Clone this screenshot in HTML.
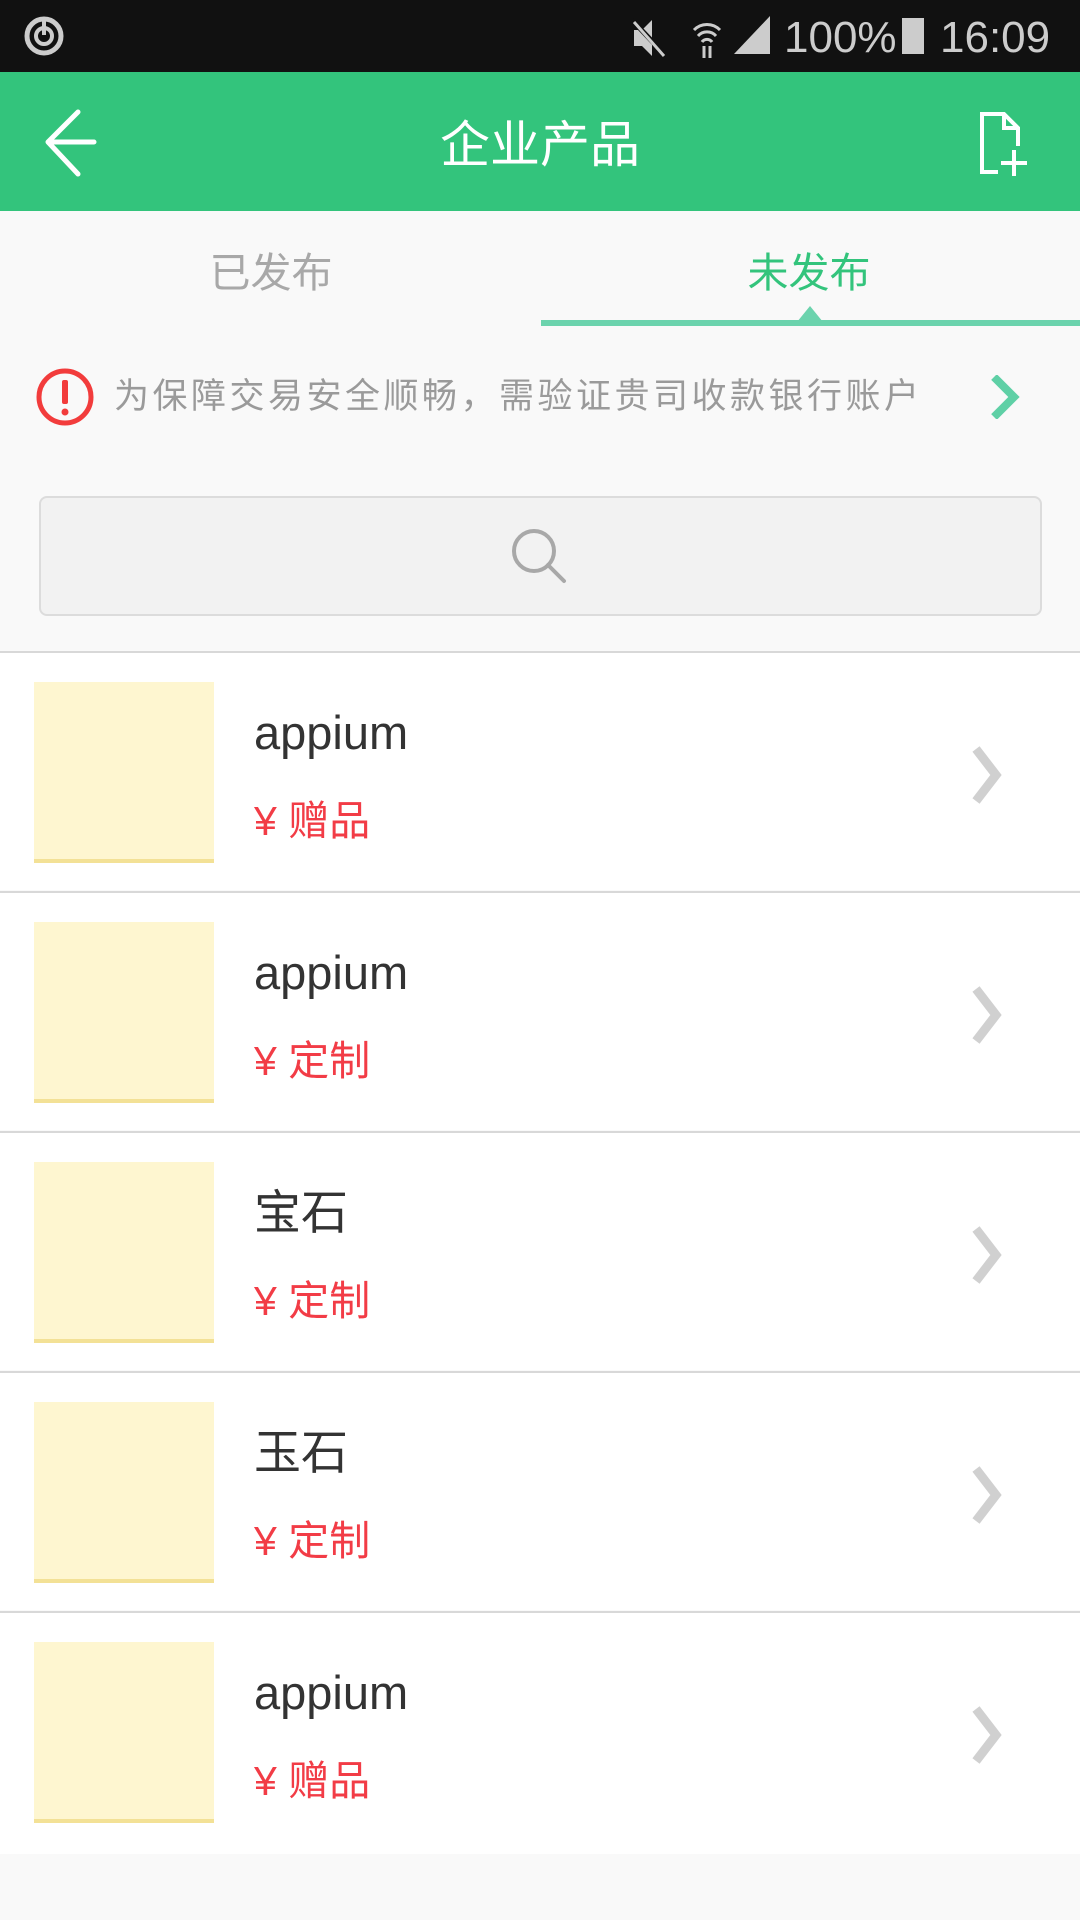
<!DOCTYPE html>
<html><head><meta charset="utf-8"><style>
*{margin:0;padding:0;box-sizing:border-box}
body{width:1080px;height:1920px;background:#f9f9f9;font-family:"Liberation Sans","Noto Sans CJK SC",sans-serif;position:relative;overflow:hidden}
.abs{position:absolute}
.status{left:0;top:0;width:1080px;height:72px;background:#111}
.hdr{left:0;top:72px;width:1080px;height:139px;background:#33c47c}
.title{left:0;width:1080px;top:115px;text-align:center;color:#fff;font-size:50px;line-height:60px}
.tab{top:247px;font-size:41px;line-height:52px;width:300px;text-align:center}
.warn{left:114px;top:374px;font-size:35px;color:#9a9a9a;line-height:46px;letter-spacing:3.5px}
.search{left:39px;top:496px;width:1003px;height:120px;background:#f2f2f2;border:2px solid #dcdcdc;border-radius:8px}
.item{left:0;width:1080px;height:239px;background:#fff;border-top:2px solid #d8d8d8}
.img{position:absolute;left:34px;top:29px;width:180px;height:181px;background:#fef6d0;border-bottom:4px solid #f3e196}
.name{position:absolute;left:254px;top:52px;font-size:47px;color:#333;line-height:56px}
.price{position:absolute;left:254px;top:143px;font-size:41px;color:#f23c46;line-height:50px}
.chev{position:absolute;left:968px;top:92px}
</style></head><body>
<div class="abs status"></div>
<svg class="abs" style="left:22px;top:14px" width="44" height="44" viewBox="0 0 44 44"><circle cx="22" cy="22" r="17" fill="none" stroke="#ccc" stroke-width="5"/><circle cx="22" cy="22" r="8" fill="none" stroke="#ccc" stroke-width="4"/><rect x="20" y="7" width="4" height="14" fill="#ccc"/></svg>
<svg class="abs" style="left:630px;top:16px" width="120" height="44" viewBox="0 0 120 44"><path d="M4 14h8l10-10v36l-10-10H4z" fill="#ccc"/><path d="M2 4l34 36" stroke="#111" stroke-width="5"/><path d="M4 6l30 34" stroke="#ccc" stroke-width="3"/><path d="M64 14a18 18 0 0 1 26 0M68 20a12 12 0 0 1 18 0M72 26a6 6 0 0 1 10 0" stroke="#ccc" stroke-width="3" fill="none"/><path d="M74 30v12M80 30v12" stroke="#ccc" stroke-width="3"/></svg>
<svg class="abs" style="left:732px;top:14px" width="40" height="42"><path d="M2 40L38 2V40z" fill="#ccc"/></svg>
<div class="abs" style="left:784px;top:12px;color:#ccc;font-size:44px;line-height:52px">100%</div>
<div class="abs" style="left:902px;top:18px;width:22px;height:36px;background:#ccc"></div>
<div class="abs" style="left:940px;top:12px;color:#ccc;font-size:44px;line-height:52px">16:09</div>
<div class="abs hdr"></div>
<svg class="abs" style="left:40px;top:108px" width="60" height="70" viewBox="0 0 60 70"><path d="M38 4L8 34l30 32M8 34h46" stroke="#fff" stroke-width="5" fill="none" stroke-linecap="round" stroke-linejoin="round"/></svg>
<div class="abs title">企业产品</div>
<svg class="abs" style="left:978px;top:110px" width="52" height="68" viewBox="0 0 52 68"><path d="M20 62H4V4h22l14 14v18" stroke="#fff" stroke-width="4" fill="none"/><path d="M26 4v14h14" stroke="#fff" stroke-width="4" fill="none"/><path d="M36 40v26M23 53h26" stroke="#fff" stroke-width="4"/></svg>
<div class="abs tab" style="left:121px;color:#a8a8a8">已发布</div>
<div class="abs tab" style="left:659px;color:#33c47c">未发布</div>
<div class="abs" style="left:541px;top:320px;width:539px;height:6px;background:#6bd3ad"></div>
<svg class="abs" style="left:797px;top:306px" width="26" height="16"><path d="M0 16L13 0l13 16z" fill="#6bd3ad"/></svg>
<svg class="abs" style="left:35px;top:367px" width="60" height="60" viewBox="0 0 60 60"><circle cx="30" cy="30" r="26" fill="none" stroke="#f23c3c" stroke-width="5"/><rect x="27" y="13" width="6" height="24" rx="2" fill="#f23c3c"/><circle cx="30" cy="45" r="3.5" fill="#f23c3c"/></svg>
<div class="abs warn">为保障交易安全顺畅，需验证贵司收款银行账户</div>
<svg class="abs" style="left:990px;top:375px" width="32" height="44" viewBox="0 0 32 44"><path d="M4 2l20 20L4 42" stroke="#5fd0a6" stroke-width="8" fill="none"/></svg>
<div class="abs search"></div>
<svg class="abs" style="left:508px;top:525px" width="64" height="64" viewBox="0 0 64 64"><circle cx="26" cy="26" r="20" fill="none" stroke="#a8a8a8" stroke-width="4"/><path d="M40 40l16 16" stroke="#a8a8a8" stroke-width="4" stroke-linecap="round"/></svg>

<div class="abs item" style="top:651px"><div class="img"></div><div class="name">appium</div><div class="price">¥ 赠品</div><svg class="chev" width="40" height="60" viewBox="0 0 40 60"><path d="M8 4l20 26L8 56" stroke="#d0d0d0" stroke-width="9" fill="none"/></svg></div>
<div class="abs item" style="top:891px"><div class="img"></div><div class="name">appium</div><div class="price">¥ 定制</div><svg class="chev" width="40" height="60" viewBox="0 0 40 60"><path d="M8 4l20 26L8 56" stroke="#d0d0d0" stroke-width="9" fill="none"/></svg></div>
<div class="abs item" style="top:1131px"><div class="img"></div><div class="name">宝石</div><div class="price">¥ 定制</div><svg class="chev" width="40" height="60" viewBox="0 0 40 60"><path d="M8 4l20 26L8 56" stroke="#d0d0d0" stroke-width="9" fill="none"/></svg></div>
<div class="abs item" style="top:1371px"><div class="img"></div><div class="name">玉石</div><div class="price">¥ 定制</div><svg class="chev" width="40" height="60" viewBox="0 0 40 60"><path d="M8 4l20 26L8 56" stroke="#d0d0d0" stroke-width="9" fill="none"/></svg></div>
<div class="abs item" style="top:1611px;height:243px"><div class="img"></div><div class="name">appium</div><div class="price">¥ 赠品</div><svg class="chev" width="40" height="60" viewBox="0 0 40 60"><path d="M8 4l20 26L8 56" stroke="#d0d0d0" stroke-width="9" fill="none"/></svg></div>
</body></html>
